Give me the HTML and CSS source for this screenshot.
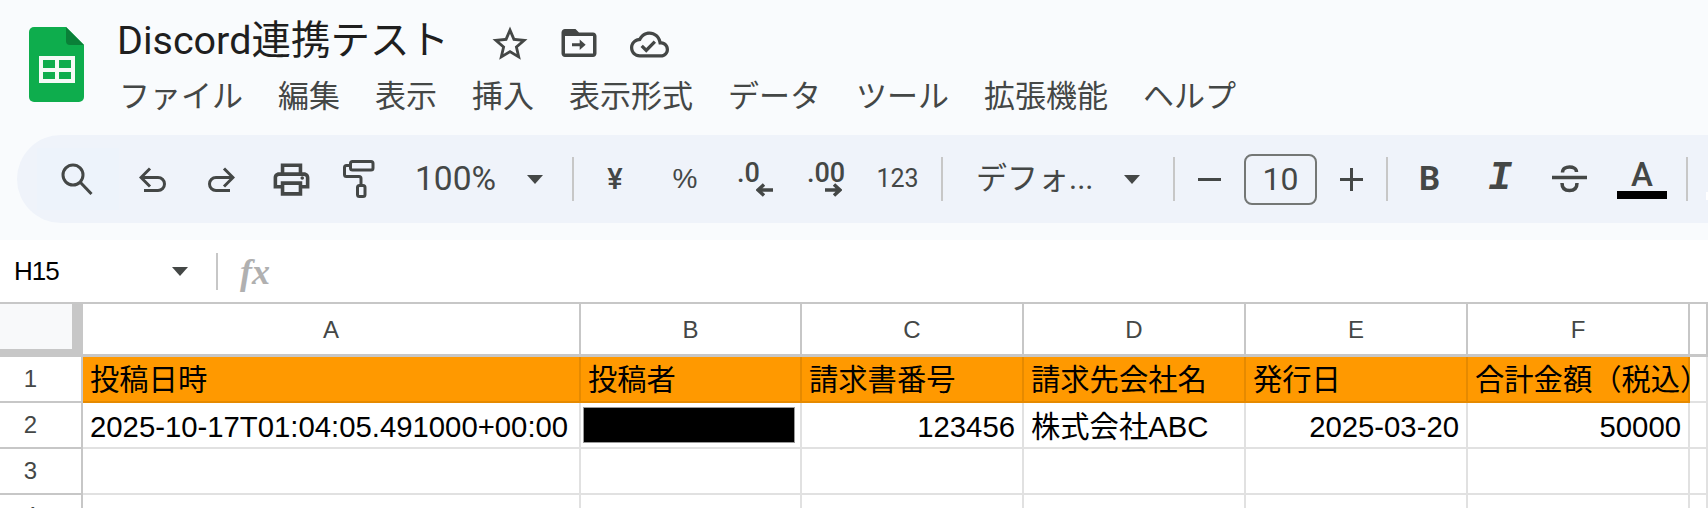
FILE: index.html
```html
<!DOCTYPE html>
<html lang="ja">
<head>
<meta charset="utf-8">
<title>Discord連携テスト</title>
<link rel="stylesheet" href="styles.css">
</head>
<body>
<div class="top">
  <header class="head">
    <svg class="logo" viewBox="0 0 55 75" width="55" height="75">
      <path d="M5 0H37L55 18V70a5 5 0 0 1-5 5H5a5 5 0 0 1-5-5V5a5 5 0 0 1 5-5z" fill="#0ead4d"/>
      <path d="M37 0L55 18H41a4 4 0 0 1-4-4z" fill="#0a8038"/>
      <path d="M10 29H46V56H10zM14 33V41H26V33zM30 33V41H42V33zM14 45V52H26V45zM30 45V52H42V45z" fill="#f4faf6" fill-rule="evenodd"/>
    </svg>
    <div class="titles">
      <div class="title-row">
        <h1 class="title">Discord連携テスト</h1>
        <svg class="ic-star" viewBox="0 0 24 24" width="42" height="42"><path fill="#444746" d="M22 9.24l-7.19-.62L12 2 9.19 8.63 2 9.24l5.46 4.73L5.82 21 12 17.27 18.18 21l-1.63-7.03L22 9.24zM12 15.4l-3.76 2.27 1-4.28-3.32-2.88 4.38-.38L12 6.1l1.71 4.04 4.38.38-3.32 2.88 1 4.28L12 15.4z"/></svg>
        <svg class="ic-folder" viewBox="0 0 24 24" width="42" height="42"><path fill="#444746" fill-rule="evenodd" d="M4 4h6l2 2h8c1.1 0 2 .9 2 2v10c0 1.1-.9 2-2 2H4c-1.1 0-2-.9-2-2V6c0-1.1.9-2 2-2zM4 8v10h16V8z"/><path fill="#444746" d="M8 12.200h4.400v-2.200l3.400 3-3.400 3v-2.200H8z"/></svg>
        <svg class="ic-cloud" viewBox="0 0 24 24" width="39" height="39"><path fill="#444746" d="M19.35 10.04C18.67 6.59 15.64 4 12 4 9.11 4 6.6 5.64 5.35 8.04 2.34 8.36 0 10.91 0 14c0 3.31 2.69 6 6 6h13c2.76 0 5-2.24 5-5 0-2.64-2.05-4.78-4.65-4.96zM19 18H6c-2.21 0-4-1.79-4-4 0-2.05 1.53-3.76 3.56-3.97l1.07-.11.5-.95C8.08 7.14 9.94 6 12 6c2.62 0 4.88 1.86 5.39 4.43l.3 1.5 1.53.11c1.56.1 2.78 1.41 2.78 2.96 0 1.65-1.35 3-3 3zm-9-3.82l-2.09-2.09L6.5 13.5 10 17l6.01-6.01-1.41-1.41z"/></svg>
      </div>
      <nav class="menu">
        <span>ファイル</span><span>編集</span><span>表示</span><span>挿入</span><span>表示形式</span><span>データ</span><span>ツール</span><span>拡張機能</span><span>ヘルプ</span>
      </nav>
    </div>
  </header>
  <div class="toolbar">
    <div class="tool w-search"><svg class="ic-search" viewBox="0 0 32 32" width="32" height="32"><circle class="st" cx="12" cy="12" r="10"/><path class="st" d="M19 19L30.500 31"/></svg></div>
    <div class="tool w-undo"><svg viewBox="0 0 27 25" width="27" height="25"><path class="st" d="M11 1.500L2 10.500L11 19.500M2 10.500H19a6.500 6.500 0 0 1 0 13H5"/></svg></div>
    <div class="tool w-redo"><svg viewBox="0 0 27 25" width="27" height="25"><path class="st" d="M16 1.500L25 10.500L16 19.500M25 10.500H8a6.500 6.500 0 0 0 0 13H22"/></svg></div>
    <div class="tool w-print"><svg viewBox="0 0 24 24" width="43" height="43"><path fill="#444746" d="M19 8h-1V3H6v5H5c-1.66 0-3 1.34-3 3v6h4v4h12v-4h4v-6c0-1.66-1.34-3-3-3zM8 5h8v3H8V5zm8 12v2H8v-4h8v2zm2-2v-2H6v2H4v-4c0-.55.45-1 1-1h14c.55 0 1 .45 1 1v4h-2z"/><circle fill="#444746" cx="18" cy="11.200" r="1"/></svg></div>
    <div class="tool w-paint"><svg viewBox="0 0 32 38" width="32" height="38"><rect class="st" x="7.500" y="1.500" width="22.500" height="8.500" rx="2"/><path class="st" d="M7 5.500H3.500a2 2 0 0 0-2 2V14.500a2 2 0 0 0 2 2H16a2 2 0 0 1 2 2V25"/><rect class="st" x="14.500" y="25.500" width="7.500" height="11" rx="2"/></svg></div>
    <div class="tool w-zoom"><span class="t-ui t-zoom">100%</span><i class="caret"></i></div>
    <i class="sep"></i>
    <div class="tool w-yen"><span class="t-sym">¥</span></div>
    <div class="tool w-pct"><span class="t-pct">%</span></div>
    <div class="tool w-dec1">
      <span class="t-dec">.0</span>
      <svg class="arrow-l" viewBox="0 0 17 14" width="17" height="14"><path class="st st-h" d="M8 1.500L2 7L8 12.500M2 7H17"/></svg>
    </div>
    <div class="tool w-dec2">
      <span class="t-dec">.00</span>
      <svg class="arrow-r" viewBox="0 0 17 14" width="17" height="14"><path class="st st-h" d="M9 1.500L15 7L9 12.500M15 7H0"/></svg>
    </div>
    <div class="tool w-123"><span class="t-123">123</span></div>
    <i class="sep"></i>
    <div class="tool w-font"><span class="t-ui t-cjk">デフォ...</span><i class="caret"></i></div>
    <i class="sep"></i>
    <div class="tool w-step"><i class="minus"></i></div>
    <div class="size">10</div>
    <div class="tool w-step"><i class="plus"></i></div>
    <i class="sep"></i>
    <div class="tool w-bold"><span class="t-b">B</span></div>
    <div class="tool w-ital"><span class="t-i">I</span></div>
    <div class="tool w-strike"><svg viewBox="0 0 35 28" width="35" height="28"><path class="st st-h" d="M0 12.500H35"/><path class="st st-h" d="M10.500 7.500C10.500 3.500 14 2 17.500 2 21 2 24.500 3.500 24.500 7"/><path class="st st-h" d="M10 18C10 23.500 13.500 25.500 17.500 25.500 21.500 25.500 25 23.500 25 18"/></svg></div>
    <div class="tool w-color"><span class="t-a">A</span><i class="colorbar"></i></div>
    <i class="sep"></i>
    <i class="fillbar"></i>
  </div>
</div>
<div class="fbar">
  <div class="namebox"><span class="nm">H15</span><i class="caret"></i></div>
  <i class="sep sep-f"></i>
  <span class="fx">fx</span>
</div>
<div class="sheet">
  <div class="corner"></div>
  <div class="ch">A</div><div class="ch">B</div><div class="ch">C</div><div class="ch">D</div><div class="ch">E</div><div class="ch">F</div><div class="ch"></div>

  <div class="rh">1</div>
  <div class="c hd">投稿日時</div><div class="c hd">投稿者</div><div class="c hd">請求書番号</div><div class="c hd">請求先会社名</div><div class="c hd">発行日</div><div class="c hd over">合計金額（税込）</div><div class="c"></div>

  <div class="rh">2</div>
  <div class="c">2025-10-17T01:04:05.491000+00:00</div><div class="c"><div class="redact"></div></div><div class="c r">123456</div><div class="c">株式会社ABC</div><div class="c r">2025-03-20</div><div class="c r">50000</div><div class="c"></div>

  <div class="rh">3</div>
  <div class="c"></div><div class="c"></div><div class="c"></div><div class="c"></div><div class="c"></div><div class="c"></div><div class="c"></div>

  <div class="rh rh-cut">4</div>
  <div class="c c-cut"></div><div class="c c-cut"></div><div class="c c-cut"></div><div class="c c-cut"></div><div class="c c-cut"></div><div class="c c-cut"></div><div class="c c-cut"></div>
</div>
</body>
</html>
```
FILE: styles.css
```css
* { box-sizing: border-box; }
html, body { margin: 0; padding: 0; }
body {
  width: 1708px;
  height: 508px;
  overflow: hidden;
  background: #fff;
  font-family: "Liberation Sans", "Noto Sans CJK JP", sans-serif;
  color: #000;
}
.top { height: 240px; background: #f9fbfd; overflow: hidden; }
.head { height: 135px; padding: 27px 0 0 29px; display: flex; align-items: flex-start; }
.logo { flex: none; }
.titles { margin-left: 33px; }
.title-row { display: flex; align-items: center; height: 44px; margin-top: -4px; }
.title {
  margin: 0 0 8px;
  font: 400 39.500px/44px Roboto, "Noto Sans CJK JP", sans-serif;
  color: #1f1f1f;
  width: 372px;
  white-space: nowrap;
}
.ic-star { flex: none; margin-bottom: 2px; }
.ic-folder { margin: 0 0 4px 27px; flex: none; }
.ic-cloud { margin: 0 0 2px 30px; flex: none; }
.menu {
  display: flex;
  gap: 35px;
  margin: 7px 0 0 2px;
  font: 400 31px/40px "Noto Sans CJK JP", sans-serif;
  color: #444746;
  white-space: nowrap;
}
.toolbar {
  margin-left: 17px;
  width: 1691px;
  height: 88px;
  padding-left: 20px;
  background: #eff3fa;
  border-radius: 44px 0 0 44px;
  display: flex;
  align-items: center;
  overflow: hidden;
}
.tool { flex: none; height: 62px; display: flex; align-items: center; justify-content: center; }
.st { fill: none; stroke: #444746; stroke-width: 3; }
.st-h { stroke-width: 3.500; }
.w-search { width: 82px; background: #edf3fb; }
.ic-search { margin-left: -2px; }
.w-undo { width: 66px; }
.w-redo { width: 72px; }
.w-print { width: 68px; }
.w-paint { width: 68px; }
.w-zoom { width: 179px; justify-content: space-between; padding: 0 29px 0 22px; }
.w-yen { width: 82px; }
.w-pct { width: 58px; }
.w-dec1 { width: 82px; flex-direction: column; align-items: flex-start; padding-left: 23px; }
.w-dec2 { width: 58px; flex-direction: column; align-items: flex-start; padding-left: 11px; }
.arrow-l { margin: -2px 0 0 19px; }
.arrow-r { margin: -2px 0 0 18px; }
.w-123 { width: 87px; }
.w-font { width: 230px; justify-content: space-between; padding: 0 33px 0 33px; }
.w-step { width: 69px; }
.w-bold { width: 83px; }
.w-ital { width: 58px; }
.w-strike { width: 81px; }
.w-color { width: 64px; margin-right: 12px; flex-direction: column; justify-content: flex-start; padding-top: 14px; }
.sep { flex: none; width: 2px; height: 44px; background: #c7c7c7; display: block; }
.fillbar { flex: none; width: 4px; height: 8px; margin: 34px 0 0 18px; background: #fff; display: block; }
.caret {
  display: block;
  flex: none;
  width: 0; height: 0;
  border-left: 8.500px solid transparent;
  border-right: 8.500px solid transparent;
  border-top: 9px solid #444746;
}
.t-ui { font: 400 31px/40px Roboto, "Noto Sans CJK JP", sans-serif; color: #444746; }
.t-zoom { font-size: 33.500px; }
.t-cjk { white-space: nowrap; }
.t-sym { font: 500 29px/36px Roboto, sans-serif; color: #444746; }
.t-pct { font: 400 28px/36px "Liberation Sans", sans-serif; color: #444746; }
.t-dec { font: 500 27px/24px Roboto, sans-serif; color: #444746; }
.t-123 { font: 400 25px/36px Roboto, sans-serif; color: #444746; }
.t-b { font: 700 33px/36px Roboto, sans-serif; color: #444746; }
.t-i { font: italic 700 40px/36px "Liberation Mono", monospace; color: #444746; }
.t-a { font: 500 33px/26px Roboto, sans-serif; color: #444746; }
.colorbar { display: block; flex: none; width: 50px; height: 8px; margin-top: 3px; background: #000; }
.minus { display: block; width: 23px; height: 3px; background: #444746; }
.plus { display: block; width: 23px; height: 23px;
  background: linear-gradient(#444746, #444746) center/100% 3px no-repeat,
              linear-gradient(#444746, #444746) center/3px 100% no-repeat; }
.size {
  flex: none;
  width: 73px; height: 51px;
  border: 2px solid #747775;
  border-radius: 8px;
  display: flex; align-items: center; justify-content: center;
  font: 400 32px/40px Roboto, sans-serif;
  color: #444746;
}
.fbar { height: 62px; display: flex; align-items: center; background: #fff; }
.namebox { width: 216px; display: flex; align-items: center; justify-content: space-between; padding: 0 28px 0 14px; font-size: 26px; line-height: 36px; }
.nm { letter-spacing: -1px; }
.sep-f { height: 37px; }
.fx { margin: 2px 0 0 22px; font: italic 700 36px/40px "Liberation Serif", serif; color: #b0b0b0; }
.sheet {
  display: grid;
  grid-template-columns: 83px 498px 221px 222px 222px 222px 222px 18px;
  grid-template-rows: 53px 46px 46px 46px 13px;
  height: 206px;
  border-top: 2px solid #c7c7c7;
}
.corner { background: #f8f9fa; border-right: 11px solid #c7c7c7; border-bottom: 8px solid #c7c7c7; }
.ch {
  display: flex; align-items: center; justify-content: center;
  padding-top: 1px;
  border-right: 2px solid #c7c7c7;
  border-bottom: 3px solid #c7c7c7;
  font: 400 24px/28px "Liberation Sans", sans-serif;
  color: #444746;
}
.rh {
  display: flex; align-items: center; justify-content: center;
  padding: 0 20px 1px 0;
  border-right: 2px solid #c7c7c7;
  border-bottom: 2px solid #c7c7c7;
  font: 400 24px/28px "Liberation Sans", sans-serif;
  color: #444746;
}
.rh-cut { align-items: flex-start; padding: 7px 20px 0 0; border-bottom: 0; overflow: hidden; }
.c {
  padding: 3px 7px 0;
  display: flex; align-items: center;
  border-right: 2px solid #e1e1e1;
  border-bottom: 2px solid #e1e1e1;
  font-size: 29.300px;
  line-height: 36px;
  white-space: nowrap;
  overflow: hidden;
}
.c-cut { border-bottom: 0; }
.r { justify-content: flex-end; }
.hd {
  padding-top: 2px;
  background: #f90;
  border-right-color: #e68a00;
  border-bottom-color: #e68a00;
}
.over { overflow: visible; padding-right: 0; }
.redact { width: 212px; height: 36px; margin: -3px 0 0 -5px; background: #000; border: 1px solid #999; flex: none; }
```
